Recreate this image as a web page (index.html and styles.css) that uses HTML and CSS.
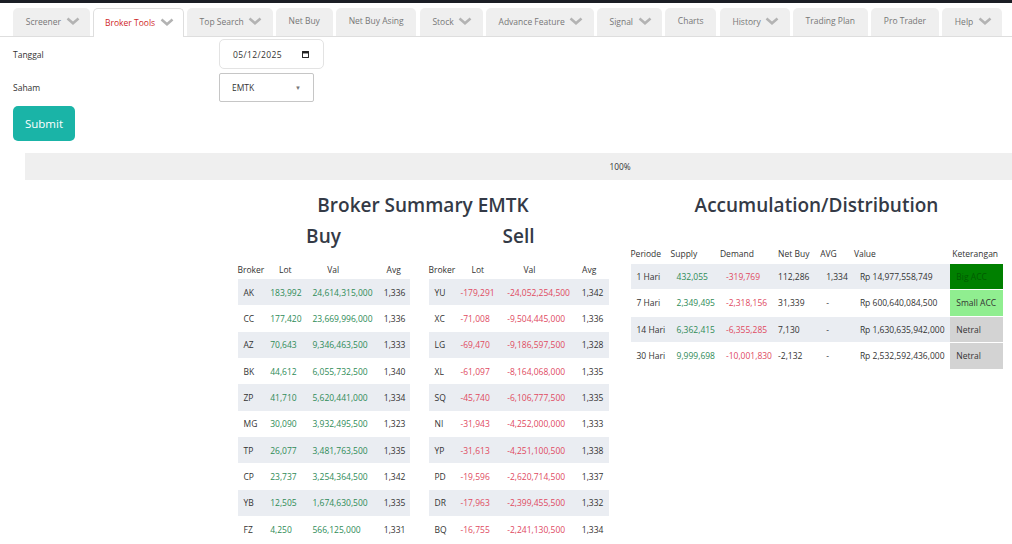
FILE: index.html
```html
<!DOCTYPE html>
<html lang="id">
<head>
<meta charset="utf-8">
<title>Broker Summary</title>
<link rel="stylesheet" href="styles.css">
</head>
<body>
<div class="topbar"></div>
<nav class="tabs">
  <div class="tab">Screener<svg class="chev" viewBox="0 0 14 8"><polyline points="1.5,1.5 7,6.3 12.5,1.5"/></svg></div>
  <div class="tab active">Broker Tools<svg class="chev" viewBox="0 0 14 8"><polyline points="1.5,1.5 7,6.3 12.5,1.5"/></svg></div>
  <div class="tab">Top Search<svg class="chev" viewBox="0 0 14 8"><polyline points="1.5,1.5 7,6.3 12.5,1.5"/></svg></div>
  <div class="tab plain">Net Buy</div>
  <div class="tab plain">Net Buy Asing</div>
  <div class="tab">Stock<svg class="chev" viewBox="0 0 14 8"><polyline points="1.5,1.5 7,6.3 12.5,1.5"/></svg></div>
  <div class="tab">Advance Feature<svg class="chev" viewBox="0 0 14 8"><polyline points="1.5,1.5 7,6.3 12.5,1.5"/></svg></div>
  <div class="tab">Signal<svg class="chev" viewBox="0 0 14 8"><polyline points="1.5,1.5 7,6.3 12.5,1.5"/></svg></div>
  <div class="tab plain">Charts</div>
  <div class="tab">History<svg class="chev" viewBox="0 0 14 8"><polyline points="1.5,1.5 7,6.3 12.5,1.5"/></svg></div>
  <div class="tab plain">Trading Plan</div>
  <div class="tab plain">Pro Trader</div>
  <div class="tab">Help<svg class="chev" viewBox="0 0 14 8"><polyline points="1.5,1.5 7,6.3 12.5,1.5"/></svg></div>
</nav>

<form class="form">
  <div class="field">
    <label class="label">Tanggal</label>
    <div class="date-box">
      <span>05/12/2025</span>
      <svg class="cal" viewBox="0 0 8 8"><rect x="0.6" y="0.6" width="6.8" height="6.8" fill="none" stroke="#222" stroke-width="1.1"/><rect x="0.6" y="0.6" width="6.8" height="2.2" fill="#222"/></svg>
    </div>
  </div>
  <div class="field">
    <label class="label">Saham</label>
    <div class="select-box"><span>EMTK</span><span class="arrow">▼</span></div>
  </div>
  <button type="button" class="submit">Submit</button>
</form>

<main class="main">
  <div class="progress">100%</div>

  <div class="content">
    <section class="summary">
      <h2 class="title">Broker Summary EMTK</h2>
      <div class="sides">
        <div class="side buy">
          <h3 class="subtitle">Buy</h3>
          <table class="bt">
            <colgroup><col class="c1"><col class="c2"><col class="c3"><col class="c4"></colgroup>
            <thead><tr><th>Broker</th><th>Lot</th><th class="val">Val</th><th>Avg</th></tr></thead>
            <tbody>
              <tr><td>AK</td><td class="g">183,992</td><td class="g">24,614,315,000</td><td>1,336</td></tr>
              <tr><td>CC</td><td class="g">177,420</td><td class="g">23,669,996,000</td><td>1,336</td></tr>
              <tr><td>AZ</td><td class="g">70,643</td><td class="g">9,346,463,500</td><td>1,333</td></tr>
              <tr><td>BK</td><td class="g">44,612</td><td class="g">6,055,732,500</td><td>1,340</td></tr>
              <tr><td>ZP</td><td class="g">41,710</td><td class="g">5,620,441,000</td><td>1,334</td></tr>
              <tr><td>MG</td><td class="g">30,090</td><td class="g">3,932,495,500</td><td>1,323</td></tr>
              <tr><td>TP</td><td class="g">26,077</td><td class="g">3,481,763,500</td><td>1,335</td></tr>
              <tr><td>CP</td><td class="g">23,737</td><td class="g">3,254,364,500</td><td>1,342</td></tr>
              <tr><td>YB</td><td class="g">12,505</td><td class="g">1,674,630,500</td><td>1,335</td></tr>
              <tr><td>FZ</td><td class="g">4,250</td><td class="g">566,125,000</td><td>1,331</td></tr>
            </tbody>
          </table>
        </div>
        <div class="side sell">
          <h3 class="subtitle">Sell</h3>
          <table class="bt">
            <colgroup><col class="c1"><col class="c2"><col class="c3"><col class="c4"></colgroup>
            <thead><tr><th>Broker</th><th>Lot</th><th class="val">Val</th><th class="avg">Avg</th></tr></thead>
            <tbody>
              <tr><td>YU</td><td class="r">-179,291</td><td class="r">-24,052,254,500</td><td>1,342</td></tr>
              <tr><td>XC</td><td class="r">-71,008</td><td class="r">-9,504,445,000</td><td>1,336</td></tr>
              <tr><td>LG</td><td class="r">-69,470</td><td class="r">-9,186,597,500</td><td>1,328</td></tr>
              <tr><td>XL</td><td class="r">-61,097</td><td class="r">-8,164,068,000</td><td>1,335</td></tr>
              <tr><td>SQ</td><td class="r">-45,740</td><td class="r">-6,106,777,500</td><td>1,335</td></tr>
              <tr><td>NI</td><td class="r">-31,943</td><td class="r">-4,252,000,000</td><td>1,333</td></tr>
              <tr><td>YP</td><td class="r">-31,613</td><td class="r">-4,251,100,500</td><td>1,338</td></tr>
              <tr><td>PD</td><td class="r">-19,596</td><td class="r">-2,620,714,500</td><td>1,337</td></tr>
              <tr><td>DR</td><td class="r">-17,963</td><td class="r">-2,399,455,500</td><td>1,332</td></tr>
              <tr><td>BQ</td><td class="r">-16,755</td><td class="r">-2,241,130,500</td><td>1,334</td></tr>
            </tbody>
          </table>
        </div>
      </div>
    </section>

    <section class="accdist">
      <h2 class="title">Accumulation/Distribution</h2>
      <table class="at">
        <colgroup><col class="a1"><col class="a2"><col class="a3"><col class="a4"><col class="a5"><col class="a6"><col class="a7"></colgroup>
        <thead><tr><th>Periode</th><th>Supply</th><th>Demand</th><th class="nb">Net Buy</th><th>AVG</th><th>Value</th><th class="ket">Keterangan</th></tr></thead>
        <tbody>
          <tr><td>1 Hari</td><td class="g">432,055</td><td class="r">-319,769</td><td>112,286</td><td>1,334</td><td>Rp 14,977,558,749</td><td class="big">Big ACC</td></tr>
          <tr><td>7 Hari</td><td class="g">2,349,495</td><td class="r">-2,318,156</td><td>31,339</td><td>-</td><td>Rp 600,640,084,500</td><td class="small">Small ACC</td></tr>
          <tr><td>14 Hari</td><td class="g">6,362,415</td><td class="r">-6,355,285</td><td>7,130</td><td>-</td><td>Rp 1,630,635,942,000</td><td class="netral">Netral</td></tr>
          <tr><td>30 Hari</td><td class="g">9,999,698</td><td class="r">-10,001,830</td><td>-2,132</td><td>-</td><td>Rp 2,532,592,436,000</td><td class="netral">Netral</td></tr>
        </tbody>
      </table>
    </section>
  </div>
</main>
</body>
</html>
```

FILE: styles.css
```css
html, body {
  margin: 0;
  padding: 0;
  overflow: hidden;
  background: #fff;
}
body {
  font-family: "Open Sans", "Noto Sans", Arial, sans-serif;
  font-size: 8.5px;
  color: #333;
  width: 1012px;
  height: 544px;
}

.topbar {
  height: 3px;
  background: #1b1e25;
}

/* Tabs */
.tabs {
  display: flex;
  gap: 3.2px;
  margin-top: 5px;
  padding-left: 13px;
  border-bottom: 1px solid #dedede;
  height: 28px;
}
.tab {
  display: flex;
  align-items: center;
  padding: 1px 10.3px 0 12.8px;
  background: #efefef;
  color: #777;
  border-radius: 5px 5px 0 0;
  white-space: nowrap;
  box-sizing: border-box;
  height: 28px;
  line-height: 1;
}
.tab.plain {
  padding: 0 12.8px 1px;
}
.tab.active {
  background: #fff;
  color: #cf1f28;
  border: 1px solid #dedede;
  border-bottom: none;
  height: 29px;
  padding: 1px 9px 0 11px;
}
.chev {
  width: 14px;
  height: 8px;
  margin-left: 4.5px;
  margin-bottom: 3px;
  fill: none;
  stroke: #b3b3b3;
  stroke-width: 2.5;
}

/* Form */
.form {
  padding: 2px 13px 0;
  display: flex;
  flex-direction: column;
  gap: 4px;
  align-items: flex-start;
}
.field {
  display: flex;
  align-items: center;
}
.label {
  width: 206px;
  color: #333;
}
.date-box {
  box-sizing: border-box;
  width: 105px;
  height: 30px;
  border: 1px solid #e3e3e3;
  border-radius: 5px;
  display: flex;
  align-items: center;
  justify-content: space-between;
  padding: 0 14px 0 13px;
  color: #333;
  letter-spacing: 0.4px;
}
.cal {
  width: 7px;
  height: 7px;
}
.select-box {
  box-sizing: border-box;
  width: 95px;
  height: 29px;
  border: 1px solid #c6c6c6;
  border-radius: 2px;
  display: flex;
  align-items: center;
  justify-content: space-between;
  padding: 0 12px 0 12px;
  color: #333;
}
.arrow {
  font-size: 6px;
  color: #777;
}
.submit {
  width: 62px;
  height: 35px;
  border: none;
  border-radius: 5px;
  background: #1ab4a7;
  color: #fff;
  font-family: "Open Sans", "Noto Sans", Arial, sans-serif;
  font-size: 11.5px;
  padding: 0;
}

/* Main */
.main {
  margin: 12px 0 0 25px;
  width: 1190px;
}
.progress {
  height: 27px;
  line-height: 27px;
  background: #efefef;
  text-align: center;
  font-size: 8.3px;
  color: #333;
}
.content {
  display: flex;
  justify-content: center;
  align-items: flex-start;
  gap: 22px;
  margin-top: 13px;
}
.title {
  margin: 0;
  font-size: 19px;
  font-weight: 600;
  line-height: 24px;
  text-align: center;
  color: #343a46;
}
.summary {
  width: 371px;
}
.sides {
  display: flex;
  gap: 19px;
  margin-top: 7px;
}
.subtitle {
  margin: 0 0 11px;
  font-size: 19px;
  font-weight: 600;
  line-height: 24px;
  text-align: center;
  color: #343a46;
}
.buy { width: 172px; }
.sell { width: 180px; }

table {
  border-collapse: collapse;
  table-layout: fixed;
  width: 100%;
}
th {
  font-weight: normal;
  height: 20px;
  padding: 0;
  white-space: nowrap;
  color: #333;
}
td {
  height: 26.33px;
  padding: 0 0 0 6px;
  white-space: nowrap;
  box-sizing: border-box;
}
tbody tr:nth-child(odd) td {
  background: #eaedf2;
}
.g { color: #2e8b57; }
.r { color: #e04a5f; }

.bt th { text-align: center; }
.bt th.val { padding-right: 18px; }
.bt th.avg { padding-right: 6px; }
.buy .c1 { width: 26.7px; }
.buy .c2 { width: 42.3px; }
.buy .c3 { width: 71.3px; }
.buy .c4 { width: 31.7px; }
.sell .c1 { width: 26px; }
.sell .c2 { width: 46.7px; }
.sell .c3 { width: 74.6px; }
.sell .c4 { width: 32.7px; }

.accdist {
  width: 372px;
}
.at {
  margin-top: 26px;
}
.at th { text-align: left; }
.at th.nb { padding-left: 6px; }
.at th.ket { padding-left: 2px; }
.a1 { width: 40px; }
.a2 { width: 49.3px; }
.a3 { width: 52px; }
.a4 { width: 48px; }
.a5 { width: 33.7px; }
.a6 { width: 96.3px; }
.a7 { width: 52px; }
.at td { border-top: 1px solid #fff; }
.at td.big { background: #008000 !important; color: #005c00; }
.at td.small { background: #90ee90 !important; color: #333; }
.at td.netral { background: #d3d3d3 !important; color: #333; }
```
